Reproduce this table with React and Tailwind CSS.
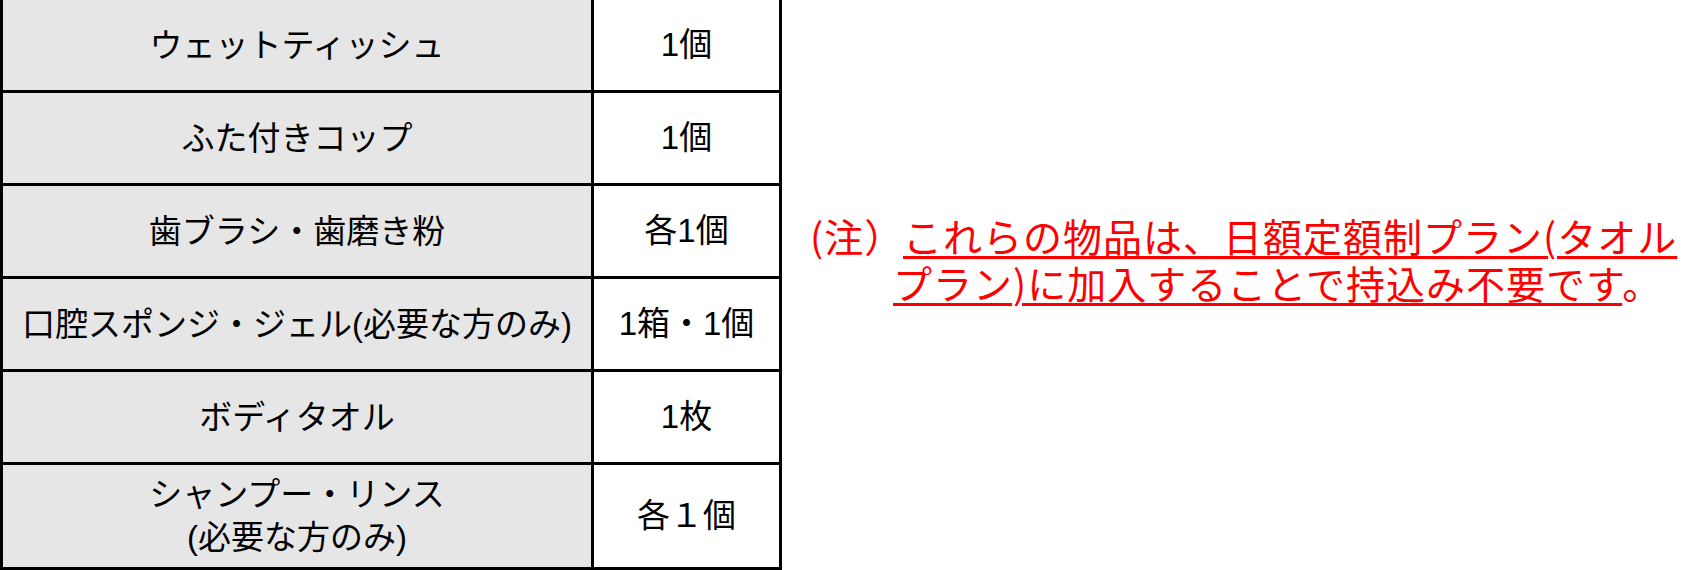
import React from 'react';

const rows = [
  ['ウェットティッシュ', '1個'],
  ['ふた付きコップ', '1個'],
  ['歯ブラシ・歯磨き粉', '各1個'],
  ['口腔スポンジ・ジェル(必要な方のみ)', '1箱・1個'],
  ['ボディタオル', '1枚'],
];

const Row = ({ first, tall, children, amount }) => (
  <div
    className={`flex ${first ? 'h-[90px]' : tall ? 'h-[105px] border-t-[3px] border-black' : 'h-[93px] border-t-[3px] border-black'}`}
  >
    <div className="w-[591px] shrink-0 bg-[#e6e6e6] border-r-[3px] border-black flex items-center justify-center text-center leading-[43px]">
      {children}
    </div>
    <div className="flex-1 bg-white flex items-center justify-center">{amount}</div>
  </div>
);

export default function App() {
  return (
    <div className="flex w-[1708px] h-[570px] bg-white overflow-hidden">
      {/* Items table */}
      <div
        className="w-[782px] shrink-0 flex flex-col border-x-[3px] border-b-[3px] border-black text-[33px] text-black"
        style={{ fontFamily: '"Liberation Sans", "Noto Sans CJK JP", sans-serif' }}
      >
        {rows.map(([name, amount], i) => (
          <Row key={name} first={i === 0} amount={amount}>
            {name}
          </Row>
        ))}
        <Row tall amount="各１個">
          <div>
            シャンプー・リンス
            <br />
            (必要な方のみ)
          </div>
        </Row>
      </div>

      {/* Note */}
      <div
        className="flex-1 flex items-start pt-[212px] pl-[28px] text-[39px] leading-[47px] text-[#ff0000] tracking-[1px]"
        style={{ fontFamily: '"Noto Sans CJK JP", sans-serif' }}
      >
        <span className="w-[83px] shrink-0 whitespace-nowrap">(注）</span>
        <p className="indent-[10px] whitespace-nowrap">
          <span className="underline decoration-[3px] underline-offset-[4px]">
            これらの物品は、日額定額制プラン(タオル
            <br />
            プラン)に加入することで持込み不要です
          </span>
          。
        </p>
      </div>
    </div>
  );
}
